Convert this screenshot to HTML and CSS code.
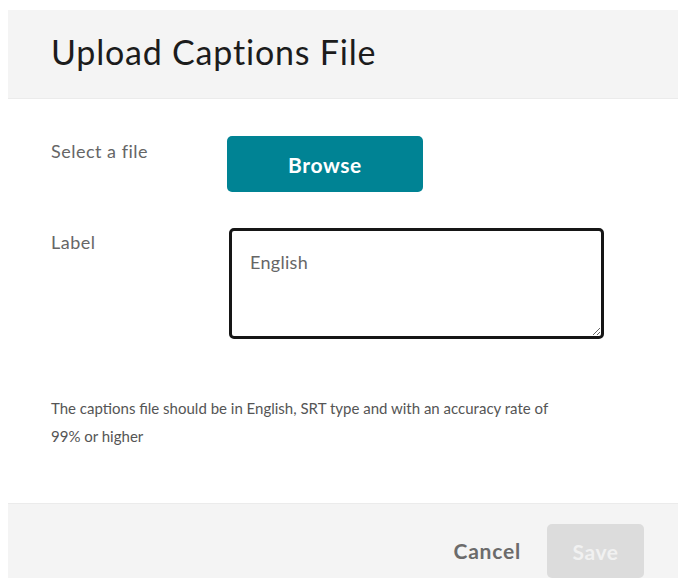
FILE: index.html
```html
<!DOCTYPE html>
<html lang="en">
<head>
<meta charset="utf-8">
<title>Upload Captions File</title>
<link rel="stylesheet" href="styles.css">
</head>
<body>
<div class="modal">
  <header class="modal-header">
    <h1 class="modal-title">Upload Captions File</h1>
  </header>
  <section class="modal-body">
    <div class="field-row">
      <span class="field-label">Select a file</span>
      <button class="btn btn-primary" type="button">Browse</button>
    </div>
    <div class="field-row">
      <span class="field-label">Label</span>
      <textarea class="label-input">English</textarea>
    </div>
    <p class="hint">The captions file should be in English, SRT type and with an accuracy rate of 99% or higher</p>
  </section>
  <footer class="modal-footer">
    <button class="btn btn-link" type="button">Cancel</button>
    <button class="btn btn-disabled" type="button" disabled>Save</button>
  </footer>
</div>
</body>
</html>
```

FILE: styles.css
```css
html, body {
  margin: 0;
  padding: 0;
  background: #ffffff;
  overflow: hidden;
}

body {
  font-family: Lato, "Open Sans", sans-serif;
}

.modal {
  margin: 10px 0 0 8px;
  width: 670px;
  display: flex;
  flex-direction: column;
}

.modal-header {
  background: #f4f4f4;
  height: 88px;
  border-bottom: 1px solid #ebebeb;
  display: flex;
  align-items: center;
  padding-left: 43px;
}

.modal-title {
  margin: 0;
  font-size: 34px;
  font-weight: 400;
  letter-spacing: 0.8px;
  color: #1c1c1c;
  margin-top: -6px;
}

.modal-body {
  padding: 37px 0 0 43px;
  height: 404px;
  box-sizing: border-box;
}

.field-row {
  display: flex;
  align-items: flex-start;
  margin-bottom: 35px;
}

.field-label {
  width: 176px;
  font-size: 18px;
  letter-spacing: 0.5px;
  color: #666666;
  padding-top: 4px;
}

.btn {
  font-family: Lato, "Open Sans", sans-serif;
  font-weight: 700;
  border: none;
  border-radius: 5px;
  cursor: pointer;
}

.btn-primary {
  width: 196px;
  height: 56px;
  background: #008394;
  color: #ffffff;
  font-size: 21px;
  letter-spacing: 0.6px;
}

.label-input {
  width: 375px;
  height: 111px;
  box-sizing: border-box;
  margin: 1px 0 0 2px;
  border: 3px solid #161616;
  border-radius: 5px;
  padding: 20px 18px;
  font-family: Lato, "Open Sans", sans-serif;
  font-size: 18px;
  letter-spacing: 0.3px;
  color: #666666;
  background: #ffffff;
  outline: none;
}

.hint {
  margin: 55px 0 0;
  width: 520px;
  font-size: 15px;
  line-height: 28px;
  color: #555555;
}

.modal-footer {
  background: #f4f4f4;
  border-top: 1px solid #ebebeb;
  height: 100px;
  display: flex;
  align-items: flex-start;
  justify-content: flex-end;
  padding: 20px 34px 0 0;
  box-sizing: border-box;
  gap: 26px;
}

.btn-link {
  background: none;
  color: #6b6b6b;
  font-size: 21px;
  letter-spacing: 0.8px;
  height: 52px;
  padding: 0;
}

.btn-disabled {
  width: 97px;
  height: 54px;
  background: #dcdcdc;
  color: #f1f1f1;
  font-size: 21px;
  letter-spacing: 0.6px;
  cursor: default;
}
```
